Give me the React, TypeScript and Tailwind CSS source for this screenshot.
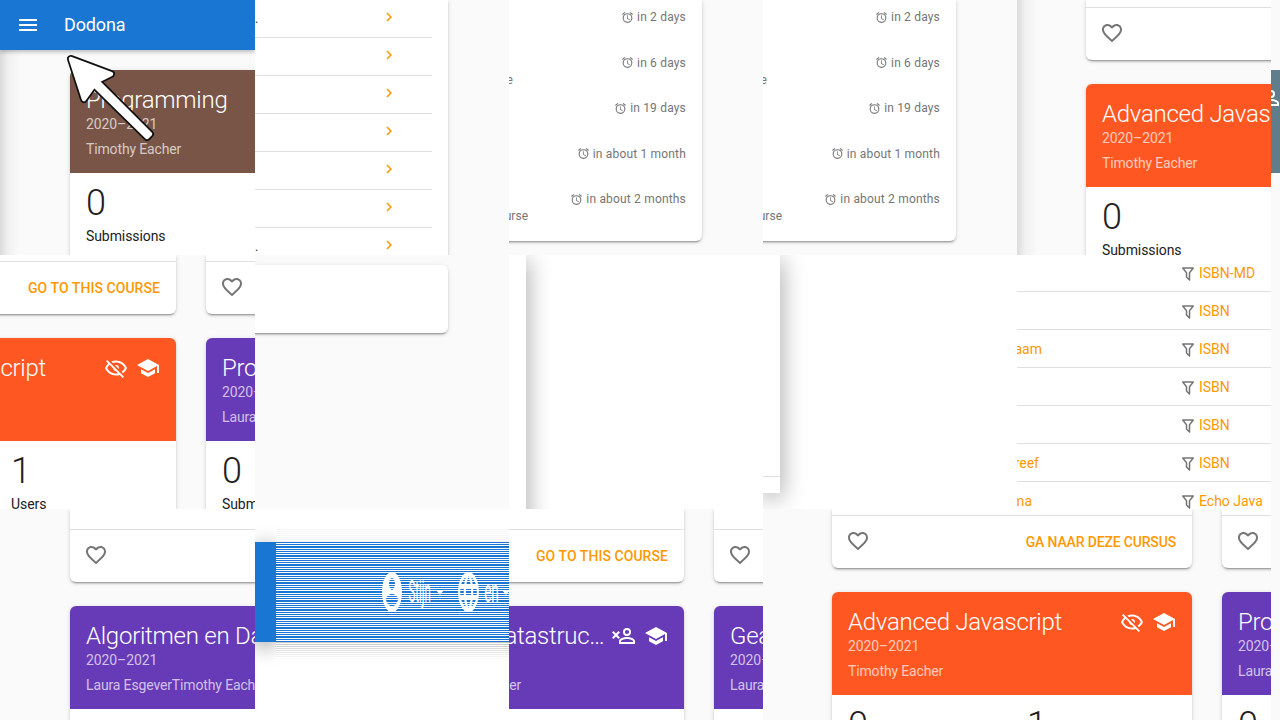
import type { ReactNode } from "react";

const paths = {
  menu: "M3,6H21V8H3V6M3,11H21V13H3V11M3,16H21V18H3V16Z",
  heart: "M12.1,18.55L12,18.65L11.89,18.55C7.14,14.24 4,11.39 4,8.5C4,6.5 5.5,5 7.5,5C9.04,5 10.54,6 11.07,7.36H12.93C13.46,6 14.96,5 16.5,5C18.5,5 20,6.5 20,8.5C20,11.39 16.86,14.24 12.1,18.55M16.5,3C14.76,3 13.09,3.81 12,5.08C10.91,3.81 9.24,3 7.5,3C4.42,3 2,5.41 2,8.5C2,12.27 5.4,15.36 10.55,20.03L12,21.35L13.45,20.03C18.6,15.36 22,12.27 22,8.5C22,5.41 19.58,3 16.5,3Z",
  eyeOff: "M2,5.27L3.28,4L20,20.72L18.73,22L15.65,18.92C14.5,19.3 13.28,19.5 12,19.5C7,19.5 2.73,16.39 1,12C1.69,10.24 2.79,8.69 4.19,7.46L2,5.27M12,9A3,3 0 0,1 15,12C15,12.35 14.94,12.69 14.83,13L11,9.17C11.31,9.06 11.65,9 12,9M12,4.5C17,4.5 21.27,7.61 23,12C22.18,14.08 20.79,15.88 19,17.19L17.58,15.76C18.94,14.82 20.06,13.54 20.82,12C19.17,8.64 15.76,6.5 12,6.5C10.91,6.5 9.84,6.68 8.84,7L7.3,5.47C8.74,4.85 10.33,4.5 12,4.5M3.18,12C4.83,15.36 8.24,17.5 12,17.5C12.69,17.5 13.37,17.43 14,17.29L11.72,15C10.29,14.85 9.15,13.71 9,12.28L5.6,8.87C4.61,9.72 3.78,10.78 3.18,12Z",
  school: "M12,3L1,9L12,15L21,10.09V17H23V9M5,13.18V17.18L12,21L19,17.18V13.18L12,17L5,13.18Z",
  personRemove: "M15,4A4,4 0 0,0 11,8A4,4 0 0,0 15,12A4,4 0 0,0 19,8A4,4 0 0,0 15,4M15,5.9A2.1,2.1 0 0,1 17.1,8A2.1,2.1 0 0,1 15,10.1A2.1,2.1 0 0,1 12.9,8A2.1,2.1 0 0,1 15,5.9M15,13C12.33,13 7,14.33 7,17V20H23V17C23,14.33 17.67,13 15,13M15,14.9C17.97,14.9 21.1,16.36 21.1,17V18.1H8.9V17C8.9,16.36 12,14.9 15,14.9M1.46,7.12L0.05,8.54L2.59,11L0.05,13.47L1.46,14.88L4,12.41L6.54,14.88L7.95,13.47L5.41,11L7.95,8.54L6.54,7.12L4,9.59L1.46,7.12Z",
  filter: "M15,19.88C15.04,20.18 14.94,20.5 14.71,20.71C14.32,21.1 13.69,21.1 13.3,20.71L9.29,16.7C9.06,16.47 8.96,16.16 9,15.87V10.75L4.21,4.62C3.87,4.19 3.95,3.56 4.38,3.22C4.57,3.08 4.78,3 5,3V3H19V3C19.22,3 19.43,3.08 19.62,3.22C20.05,3.56 20.13,4.19 19.79,4.62L15,10.75V19.88M7.04,5L11,10.06V15.58L13,17.58V10.05L16.96,5H7.04Z",
  alarm: "M12,20A7,7 0 0,1 5,13A7,7 0 0,1 12,6A7,7 0 0,1 19,13A7,7 0 0,1 12,20M12,4A9,9 0 0,0 3,13A9,9 0 0,0 12,22A9,9 0 0,0 21,13A9,9 0 0,0 12,4M12.5,8H11V14L15.75,16.85L16.5,15.56L12.5,13.25V8M7.88,3.39L6.6,1.86L2,5.71L3.29,7.24L7.88,3.39M22,5.72L17.4,1.86L16.11,3.39L20.71,7.25L22,5.72Z",
  chevron: "M8.59,16.58L13.17,12L8.59,7.41L10,6L16,12L10,18L8.59,16.58Z",
  person: "M12,2A10,10 0 0,0 2,12A10,10 0 0,0 12,22A10,10 0 0,0 22,12A10,10 0 0,0 12,2M12,5A3,3 0 0,1 15,8A3,3 0 0,1 12,11A3,3 0 0,1 9,8A3,3 0 0,1 12,5M12,19.2C9.5,19.2 7.29,17.92 6,16C6.03,14 10,12.9 12,12.9C14,12.9 17.97,14 18,16C16.71,17.92 14.5,19.2 12,19.2Z",
  web: "M16.36,14C16.44,13.34 16.5,12.68 16.5,12C16.5,11.32 16.44,10.66 16.36,10H19.74C19.9,10.64 20,11.31 20,12C20,12.69 19.9,13.36 19.74,14M14.59,19.56C15.19,18.45 15.65,17.25 15.97,16H18.92C17.96,17.65 16.43,18.93 14.59,19.56M14.34,14H9.66C9.56,13.34 9.5,12.68 9.5,12C9.5,11.32 9.56,10.65 9.66,10H14.34C14.43,10.65 14.5,11.32 14.5,12C14.5,12.68 14.43,13.34 14.34,14M12,19.96C11.17,18.76 10.5,17.43 10.09,16H13.91C13.5,17.43 12.83,18.76 12,19.96M8,8H5.08C6.03,6.34 7.57,5.06 9.4,4.44C8.8,5.55 8.35,6.75 8,8M5.08,16H8C8.35,17.25 8.8,18.45 9.4,19.56C7.57,18.93 6.03,17.65 5.08,16M4.26,14C4.1,13.36 4,12.69 4,12C4,11.31 4.1,10.64 4.26,10H7.64C7.56,10.66 7.5,11.32 7.5,12C7.5,12.68 7.56,13.34 7.64,14M12,4.03C12.83,5.23 13.5,6.57 13.91,8H10.09C10.5,6.57 11.17,5.23 12,4.03M18.92,8H15.97C15.65,6.75 15.19,5.55 14.59,4.44C16.43,5.07 17.96,6.34 18.92,8M12,2C6.47,2 2,6.5 2,12A10,10 0 0,0 12,22A10,10 0 0,0 22,12A10,10 0 0,0 12,2Z",
};

const Icon = ({ d, className }: { d: string; className: string }) => (
  <svg viewBox="0 0 24 24" preserveAspectRatio="none" fill="currentColor" className={`shrink-0 ${className}`}>
    <path d={d} />
  </svg>
);

const Tile = ({ className = "", children }: { className?: string; children?: ReactNode }) => (
  <div className={`relative flex min-w-0 overflow-hidden ${className || "bg-[#fafafa]"}`}>{children}</div>
);

const elevation = "shadow-[0_3px_1px_-2px_rgba(0,0,0,0.2),0_2px_2px_0_rgba(0,0,0,0.14),0_1px_5px_0_rgba(0,0,0,0.12)]";

interface HeadProps {
  title: string;
  teacher: string;
  color: string;
  icons?: string[];
  stats?: [string, string][];
}

const CourseHead = ({ title, teacher, color, icons = [], stats = [["0", "Submissions"], ["1", "Users"]] }: HeadProps) => (
  <div className={`bg-white rounded-t-md ${elevation}`}>
    <div className={`h-[103px] rounded-t-md px-4 text-white ${color}`}>
      <div className="flex items-center gap-2 pt-[14px]">
        <div className="-mr-1 min-w-0 flex-1 truncate text-2xl leading-8 font-light tracking-[-0.26px]">{title}</div>
        {icons.map((d) => (
          <Icon key={d} d={d} className="h-6 w-6" />
        ))}
      </div>
      <div className="text-sm leading-4 tracking-[-0.1px] text-white/70">2020–2021</div>
      <div className="mt-[7px] truncate text-sm leading-5 tracking-[-0.14px] text-white/70">{teacher}</div>
    </div>
    <div className="grid h-[130px] grid-cols-[179px_1fr] px-4 pt-[10px] text-[#212121]">
      {stats.map(([value, label]) => (
        <div key={label}>
          <div className="text-4xl leading-10 font-light">{value}</div>
          <div className="mt-[3px] text-sm leading-5 tracking-[-0.08px]">{label}</div>
        </div>
      ))}
    </div>
  </div>
);

const CourseFoot = ({ spacer, action, actionClass = "" }: { spacer: string; action?: string; actionClass?: string }) => (
  <div className={`rounded-b-md bg-white ${elevation}`}>
    <div className={spacer} />
    <div className="flex h-[53px] items-center justify-between border-t border-[#e0e0e0] pr-4 pl-[14px]">
      <Icon d={paths.heart} className="-mt-[2px] h-6 w-6 text-[#757575]" />
      {action && <div className={`text-sm font-medium text-[#ff9800] uppercase ${actionClass}`}>{action}</div>}
    </div>
  </div>
);

const Course = ({ className = "", children }: { className?: string; children: ReactNode }) => (
  <div className={`flex w-[360px] shrink-0 flex-col gap-6 ${className}`}>{children}</div>
);

const deadlines: [string, string?][] = [
  ["in 2 days"],
  ["in 6 days", "Online course"],
  ["in 19 days"],
  ["in about 1 month"],
  ["in about 2 months", "Final course"],
];

const DeadlinesTile = () => (
  <Tile>
    <div className={`-ml-2 h-[241px] w-[201px] shrink-0 rounded-b-md bg-white pt-2 pr-4 text-xs text-[#757575] ${elevation}`}>
      {deadlines.map(([when, course]) => (
        <div key={when} className="flex h-[45.5px] flex-col">
          <div className="flex h-[18px] items-center justify-end gap-[3px] leading-[18px]">
            <Icon d={paths.alarm} className="h-[13px] w-[13px]" />
            <span className="tracking-[0.18px]">{when}</span>
          </div>
          {course && (
            <div className={`flex h-[17px] justify-end whitespace-nowrap leading-[17px] ${course === "Online course" ? "w-3" : "w-[27px]"}`}>
              {course}
            </div>
          )}
        </div>
      ))}
    </div>
  </Tile>
);

const SheetEdge = ({ children, className }: { children?: ReactNode; className: string }) => (
  <div className={`flex w-[17px] shrink-0 flex-col justify-end bg-white shadow-[0_5px_24px_rgba(0,0,0,0.42)] ${className}`}>
    {children}
  </div>
);

const series: [string, string, string][] = [
  ["", "", "ISBN-MD"],
  ["", "", "ISBN"],
  ["Voornaam", "w-[25px]", "ISBN"],
  ["", "", "ISBN"],
  ["", "", "ISBN"],
  ["Bloemkoolreef", "w-[22px]", "ISBN"],
  ["Schema", "w-[15px]", "Echo Java"],
];

export default function App() {
  return (
    <div className="grid h-[720px] w-[1280px] grid-cols-[255px_254px_254px_254px_254px_9px] grid-rows-[255px_254px_211px] overflow-hidden bg-[#fafafa] font-['Roboto',sans-serif]">
      {/* row 1 */}
      <Tile className="flex-col bg-[#fafafa]">
        <div className="z-10 flex h-[50px] shrink-0 items-center bg-[#1976d2] pl-4 text-white shadow-[0_2px_4px_rgba(0,0,0,0.25)]">
          <Icon d={paths.menu} className="h-6 w-6" />
          <span className="ml-6 text-lg tracking-[-0.15px]">Dodona</span>
        </div>
        <div className="flex flex-1">
          <div className="w-5 shrink-0 bg-gradient-to-r from-[#dadada] via-[#f0f0f0] via-40% to-[#fafafa]" />
          <Course className="mt-5 ml-[50px]">
            <CourseHead title="Programming" teacher="Timothy Eacher" color="bg-[#795548]" />
          </Course>
        </div>
        <svg viewBox="0 0 110 105" className="absolute top-[48px] left-[60px] z-20 h-[105px] w-[110px]">
          <path d="M11,11L51,26L37,33L90,86L87,89L34,37L24,51Z" fill="#111" stroke="#111" strokeWidth="8" strokeLinejoin="round" />
          <path d="M11,11L51,26L37,33L90,86L87,89L34,37L24,51Z" fill="#fff" stroke="#fff" strokeWidth="4.5" strokeLinejoin="round" />
        </svg>
      </Tile>

      <Tile>
        <div className={`w-[193px] shrink-0 self-start bg-white text-[#212121] ${elevation}`}>
          {[".", "", "", "", "", "", "."].map((dot, i) => (
            <div key={i} className="mr-4 flex h-[38px] items-center justify-between border-b border-[#e0e0e0] pr-[34px] text-xs">
              <span className="leading-4">{dot}</span>
              <Icon d={paths.chevron} className="-mt-[3px] h-[18px] w-[18px] text-[#ff9800]" />
            </div>
          ))}
        </div>
      </Tile>

      <DeadlinesTile />
      <DeadlinesTile />

      <Tile>
        <div className="w-5 shrink-0 bg-gradient-to-r from-[#dcdcdc] via-[#f0f0f0] via-40% to-[#fafafa]" />
        <Course className="ml-[49px]">
          <CourseFoot spacer="h-[7px]" />
          <CourseHead title="Advanced Javascript" teacher="Timothy Eacher" color="bg-[#ff5722]" />
        </Course>
      </Tile>

      <Tile>
        <div className="mt-[70px] h-[103px] w-full bg-[#607d8b] text-white">
          <Icon d={paths.personRemove} className="mt-[16px] -ml-[15px] h-6 w-6" />
        </div>
      </Tile>

      {/* row 2 */}
      <Tile>
        <div className="-ml-[184px] flex gap-[30px]">
          <Course>
            <CourseFoot spacer="h-[6px]" action="Go to this course" actionClass="tracking-[0.06px]" />
            <CourseHead
              title="Advanced Javascript"
              teacher="Timothy Eacher"
              color="bg-[#ff5722]"
              icons={[paths.eyeOff, paths.school]}
            />
          </Course>
          <Course>
            <CourseFoot spacer="h-[6px]" />
            <CourseHead title="Programmeren" teacher="Laura Esgever" color="bg-[#673ab7]" />
          </Course>
        </div>
      </Tile>

      <Tile>
        <div className={`mt-[10px] -ml-2 h-[68px] w-[201px] shrink-0 rounded-md bg-white ${elevation}`} />
      </Tile>

      <Tile className="bg-white">
        <SheetEdge className="h-[300px]" />
      </Tile>

      <Tile className="bg-white">
        <SheetEdge className="h-[238px]">
          <div className="h-[17px] border-t border-[#e0e0e0]" />
        </SheetEdge>
      </Tile>

      <Tile className="flex-col bg-white">
        {series.map(([name, nameWidth, label], i) => (
          <div
            key={i}
            className={`flex shrink-0 items-center border-b border-[#e0e0e0] text-sm text-[#ff9800] ${i === 0 ? "h-[37px]" : "h-[38px]"}`}
          >
            <div className="w-[162px] shrink-0">
              {name && <div className={`flex justify-end whitespace-nowrap ${nameWidth}`}>{name}</div>}
            </div>
            <Icon d={paths.filter} className="mt-[2px] h-[18px] w-[18px] text-[#757575]" />
            <span className="ml-[2px] whitespace-nowrap">{label}</span>
          </div>
        ))}
      </Tile>

      <Tile />

      {/* row 3 */}
      <Tile>
        <Course className="ml-[70px]">
          <CourseFoot spacer="h-[20px]" />
          <CourseHead
            title="Algoritmen en Datastructuren"
            teacher="Laura EsgeverTimothy Eacher"
            color="bg-[#673ab7]"
            icons={[paths.personRemove, paths.school]}
          />
        </Course>
      </Tile>

      <Tile className="bg-white">
        <div className="mt-[33px] h-[100px] w-[21px] shrink-0 self-start bg-[#1976d2] shadow-[0_4px_20px_rgba(0,0,0,0.4)]" />
        <div className="mt-[20px] flex min-w-0 flex-1 flex-col self-start">
          <div className="h-[13px] bg-[repeating-linear-gradient(to_bottom,#f5f5f5_0,#f5f5f5_1px,#ffffff_1px,#ffffff_2px)]" />
          <div className="flex h-[100px] items-center bg-[repeating-linear-gradient(to_bottom,#1976d2_0,#1976d2_1px,#ffffff_1px,#ffffff_2px,#1976d2_2px,#1976d2_3px,#ffffff_3px,#ffffff_4px,#1976d2_4px,#1976d2_6px,#ffffff_6px,#ffffff_7px,#1976d2_7px,#1976d2_8px,#ffffff_8px,#ffffff_9px)] pl-[104px] text-base whitespace-nowrap text-white">
            <Icon d={paths.person} className="h-[48px] w-[24px]" />
            <span className="inline-block w-[32px] scale-x-[0.72] scale-y-[2] text-center">Stijn</span>
            <span className="ml-[1px] inline-block h-0 w-0 border-x-[4px] border-t-[5px] border-x-transparent border-t-white" />
            <Icon d={paths.web} className="ml-[12px] h-[48px] w-[25px]" />
            <span className="ml-[2px] inline-block w-[15px] scale-x-[0.85] scale-y-[2] text-center">en</span>
            <span className="ml-[4px] inline-block h-0 w-0 border-x-[4px] border-t-[5px] border-x-transparent border-t-white" />
          </div>
          <div className="h-[18px] bg-[repeating-linear-gradient(to_bottom,transparent_0,transparent_1px,#ffffff_1px,#ffffff_2px),linear-gradient(to_bottom,#c4c4c4,#ffffff)]" />
        </div>
      </Tile>

      <Tile>
        <div className="-ml-[185px] flex gap-[30px]">
          <Course>
            <CourseFoot spacer="h-[20px]" action="Go to this course" actionClass="tracking-[0.06px]" />
            <CourseHead
              title="Algoritmen en Datastructuren"
              teacher="Laura EsgeverTimothy Eacher"
              color="bg-[#673ab7]"
              icons={[paths.personRemove, paths.school]}
            />
          </Course>
          <Course>
            <CourseFoot spacer="h-[20px]" />
            <CourseHead title="Geavanceerde Programmeren" teacher="Laura Esgever" color="bg-[#673ab7]" />
          </Course>
        </div>
      </Tile>

      <Tile className="col-span-2 bg-[#fafafa]">
        <div className="ml-[69px] flex gap-[30px]">
          <Course>
            <CourseFoot spacer="h-[6px]" action="Ga naar deze cursus" actionClass="tracking-[-0.16px]" />
            <CourseHead
              title="Advanced Javascript"
              teacher="Timothy Eacher"
              color="bg-[#ff5722]"
              icons={[paths.eyeOff, paths.school]}
            />
          </Course>
          <Course>
            <CourseFoot spacer="h-[6px]" />
            <CourseHead title="Programmeren" teacher="Laura Esgever" color="bg-[#673ab7]" />
          </Course>
        </div>
      </Tile>

      <Tile />
    </div>
  );
}
